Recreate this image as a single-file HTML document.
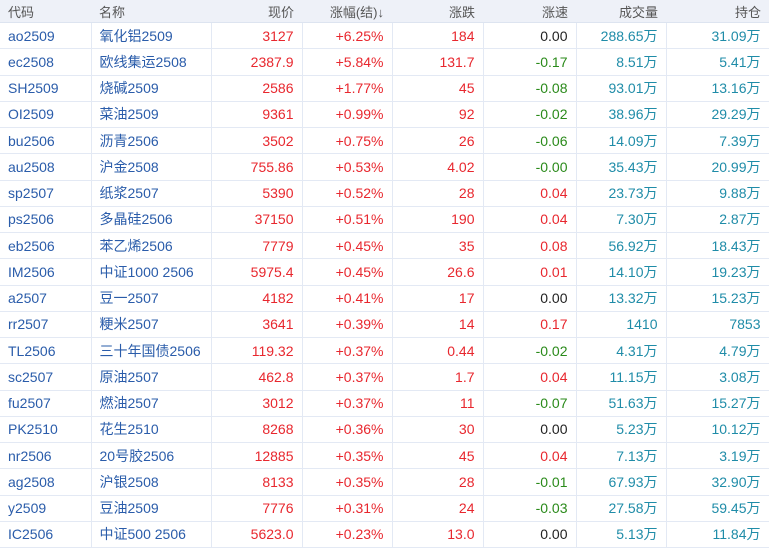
<!DOCTYPE html><html><head><meta charset="utf-8"><style>
body{margin:0;width:769px;height:547px;overflow:hidden;background:#fff;font-family:"Liberation Sans","Noto Sans CJK SC",sans-serif;font-size:14px}
table{border-collapse:collapse;table-layout:fixed;width:769px}
th{height:22px;background:#eef1f8;color:#555;font-weight:normal;font-size:13px;padding:0 8px;text-align:right;border-bottom:1px solid #dde4f0}
td{height:25.25px;padding:0 8px;text-align:right;border:1px solid #e3e9f4;border-top:none;white-space:nowrap}
tr td:first-child,tr th:first-child{border-left:none}
th.l,td.l{text-align:left}
td.c,td.n{color:#2a5caa}
.r{color:#e8272e}.g{color:#2a8a1a}.k{color:#222}.t{color:#1f8ca8}
</style></head><body><table>
<colgroup><col style="width:91px"><col style="width:120px"><col style="width:91px"><col style="width:90px"><col style="width:91px"><col style="width:93px"><col style="width:90px"><col style="width:103px"></colgroup>
<tr><th class="l">代码</th><th class="l">名称</th><th>现价</th><th>涨幅(结)↓</th><th>涨跌</th><th>涨速</th><th>成交量</th><th>持仓</th></tr>
<tr><td class="l c">ao2509</td><td class="l n">氧化铝2509</td><td class="r">3127</td><td class="r">+6.25%</td><td class="r">184</td><td class="k">0.00</td><td class="t">288.65万</td><td class="t">31.09万</td></tr>
<tr><td class="l c">ec2508</td><td class="l n">欧线集运2508</td><td class="r">2387.9</td><td class="r">+5.84%</td><td class="r">131.7</td><td class="g">-0.17</td><td class="t">8.51万</td><td class="t">5.41万</td></tr>
<tr><td class="l c">SH2509</td><td class="l n">烧碱2509</td><td class="r">2586</td><td class="r">+1.77%</td><td class="r">45</td><td class="g">-0.08</td><td class="t">93.01万</td><td class="t">13.16万</td></tr>
<tr><td class="l c">OI2509</td><td class="l n">菜油2509</td><td class="r">9361</td><td class="r">+0.99%</td><td class="r">92</td><td class="g">-0.02</td><td class="t">38.96万</td><td class="t">29.29万</td></tr>
<tr><td class="l c">bu2506</td><td class="l n">沥青2506</td><td class="r">3502</td><td class="r">+0.75%</td><td class="r">26</td><td class="g">-0.06</td><td class="t">14.09万</td><td class="t">7.39万</td></tr>
<tr><td class="l c">au2508</td><td class="l n">沪金2508</td><td class="r">755.86</td><td class="r">+0.53%</td><td class="r">4.02</td><td class="g">-0.00</td><td class="t">35.43万</td><td class="t">20.99万</td></tr>
<tr><td class="l c">sp2507</td><td class="l n">纸浆2507</td><td class="r">5390</td><td class="r">+0.52%</td><td class="r">28</td><td class="r">0.04</td><td class="t">23.73万</td><td class="t">9.88万</td></tr>
<tr><td class="l c">ps2506</td><td class="l n">多晶硅2506</td><td class="r">37150</td><td class="r">+0.51%</td><td class="r">190</td><td class="r">0.04</td><td class="t">7.30万</td><td class="t">2.87万</td></tr>
<tr><td class="l c">eb2506</td><td class="l n">苯乙烯2506</td><td class="r">7779</td><td class="r">+0.45%</td><td class="r">35</td><td class="r">0.08</td><td class="t">56.92万</td><td class="t">18.43万</td></tr>
<tr><td class="l c">IM2506</td><td class="l n">中证1000 2506</td><td class="r">5975.4</td><td class="r">+0.45%</td><td class="r">26.6</td><td class="r">0.01</td><td class="t">14.10万</td><td class="t">19.23万</td></tr>
<tr><td class="l c">a2507</td><td class="l n">豆一2507</td><td class="r">4182</td><td class="r">+0.41%</td><td class="r">17</td><td class="k">0.00</td><td class="t">13.32万</td><td class="t">15.23万</td></tr>
<tr><td class="l c">rr2507</td><td class="l n">粳米2507</td><td class="r">3641</td><td class="r">+0.39%</td><td class="r">14</td><td class="r">0.17</td><td class="t">1410</td><td class="t">7853</td></tr>
<tr><td class="l c">TL2506</td><td class="l n">三十年国债2506</td><td class="r">119.32</td><td class="r">+0.37%</td><td class="r">0.44</td><td class="g">-0.02</td><td class="t">4.31万</td><td class="t">4.79万</td></tr>
<tr><td class="l c">sc2507</td><td class="l n">原油2507</td><td class="r">462.8</td><td class="r">+0.37%</td><td class="r">1.7</td><td class="r">0.04</td><td class="t">11.15万</td><td class="t">3.08万</td></tr>
<tr><td class="l c">fu2507</td><td class="l n">燃油2507</td><td class="r">3012</td><td class="r">+0.37%</td><td class="r">11</td><td class="g">-0.07</td><td class="t">51.63万</td><td class="t">15.27万</td></tr>
<tr><td class="l c">PK2510</td><td class="l n">花生2510</td><td class="r">8268</td><td class="r">+0.36%</td><td class="r">30</td><td class="k">0.00</td><td class="t">5.23万</td><td class="t">10.12万</td></tr>
<tr><td class="l c">nr2506</td><td class="l n">20号胶2506</td><td class="r">12885</td><td class="r">+0.35%</td><td class="r">45</td><td class="r">0.04</td><td class="t">7.13万</td><td class="t">3.19万</td></tr>
<tr><td class="l c">ag2508</td><td class="l n">沪银2508</td><td class="r">8133</td><td class="r">+0.35%</td><td class="r">28</td><td class="g">-0.01</td><td class="t">67.93万</td><td class="t">32.90万</td></tr>
<tr><td class="l c">y2509</td><td class="l n">豆油2509</td><td class="r">7776</td><td class="r">+0.31%</td><td class="r">24</td><td class="g">-0.03</td><td class="t">27.58万</td><td class="t">59.45万</td></tr>
<tr><td class="l c">IC2506</td><td class="l n">中证500 2506</td><td class="r">5623.0</td><td class="r">+0.23%</td><td class="r">13.0</td><td class="k">0.00</td><td class="t">5.13万</td><td class="t">11.84万</td></tr>
</table></body></html>
